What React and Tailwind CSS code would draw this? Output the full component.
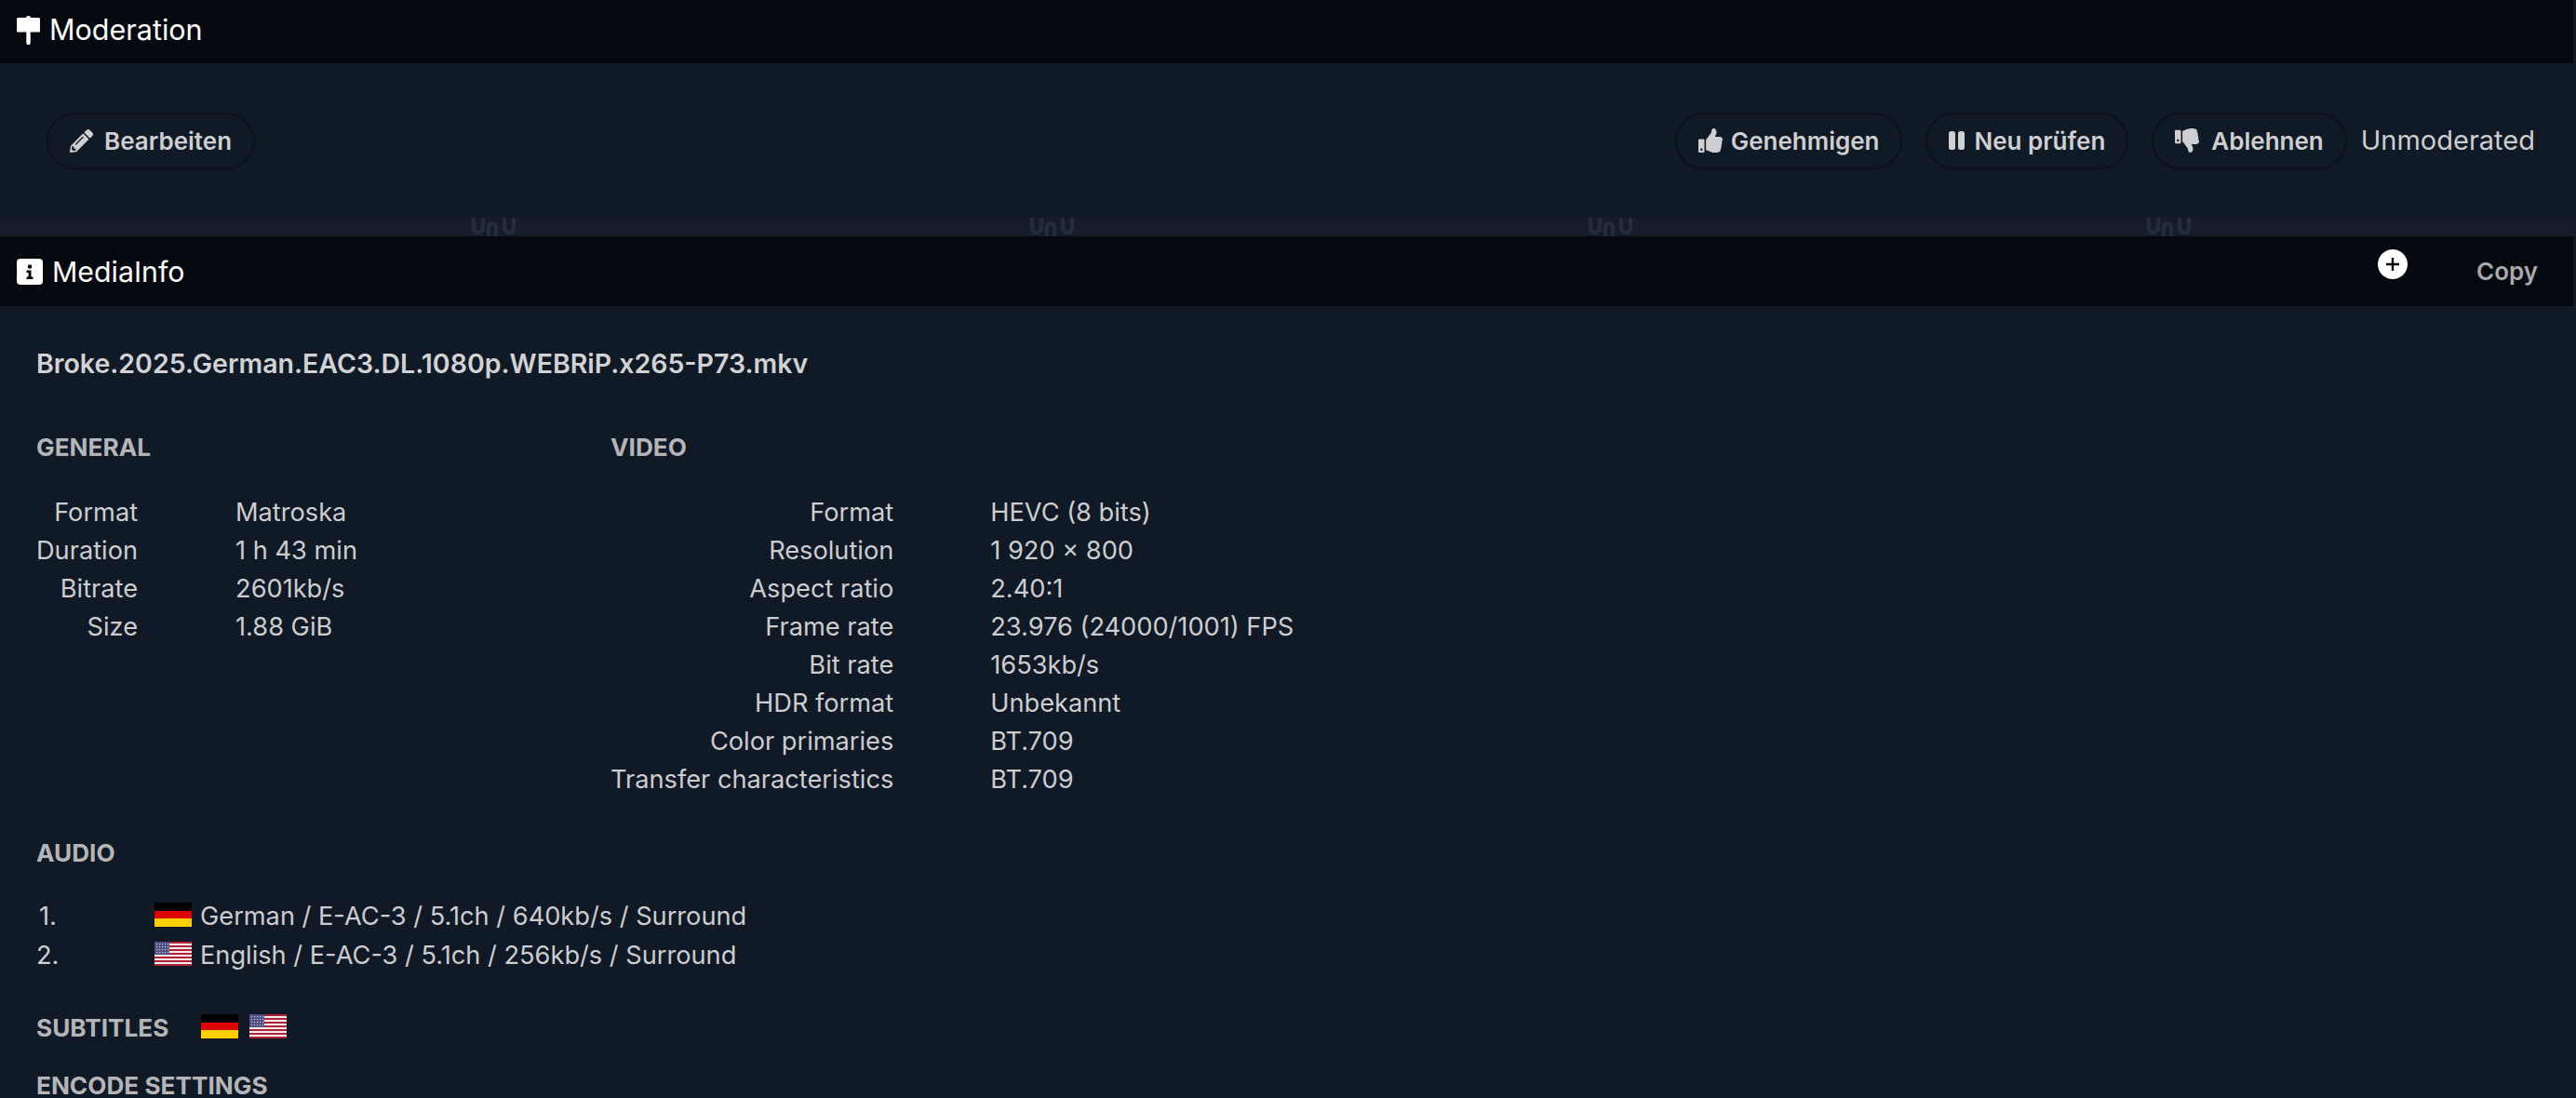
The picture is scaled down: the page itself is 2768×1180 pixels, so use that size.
import { FaPencilAlt, FaThumbsUp, FaThumbsDown } from 'react-icons/fa'

const GENERAL = [
  ['Format', 'Matroska'],
  ['Duration', '1 h 43 min'],
  ['Bitrate', '2601kb/s'],
  ['Size', '1.88 GiB'],
]

const VIDEO = [
  ['Format', 'HEVC (8 bits)'],
  ['Resolution', '1 920 × 800'],
  ['Aspect ratio', '2.40:1'],
  ['Frame rate', '23.976 (24000/1001) FPS'],
  ['Bit rate', '1653kb/s'],
  ['HDR format', 'Unbekannt'],
  ['Color primaries', 'BT.709'],
  ['Transfer characteristics', 'BT.709'],
]

function FlagDe({ className }) {
  return (
    <svg viewBox="0 0 40 26" className={className}>
      <rect width="40" height="9" fill="#000" />
      <rect y="9" width="40" height="9" fill="#dd0000" />
      <rect y="17" width="40" height="9" fill="#ffce00" />
    </svg>
  )
}

function FlagUs({ className }) {
  const stripes = [0, 4, 8, 12, 16, 20, 24]
  const cols = [2, 5, 8, 11, 14]
  const lines = [2, 5, 8, 11]
  return (
    <svg viewBox="0 0 40 26" className={className}>
      <rect width="40" height="26" fill="#eee" />
      {stripes.map((y) => <rect key={y} y={y} width="40" height="2" fill="#b22234" />)}
      <rect width="16" height="14" fill="#4f4f82" />
      {lines.map((y) => cols.map((x) => <rect key={`${x}-${y}`} x={x} y={y} width="1.200" height="1.200" fill="#c8c8d8" />))}
    </svg>
  )
}

function Mallet({ className }) {
  return (
    <svg viewBox="0 0 25 32" className={className} fill="currentColor">
      <path d="M1.500 3H9.500c.6 0 1-.5 1.200-1.200.3-1.100 3.300-1.100 3.600 0 .2.700.6 1.200 1.200 1.200h8c.8 0 1.500.7 1.500 1.500v13c0 .8-.7 1.200-1.500 1H1.500c-.8.200-1.500-.2-1.500-1v-13C0 3.700.7 3 1.500 3z" />
      <path d="M10.300 18h4.400v12a2.200 2.200 0 0 1-4.400 0z" />
    </svg>
  )
}

function InfoBox({ className }) {
  return (
    <svg viewBox="0 0 28 28" className={className}>
      <rect width="28" height="28" rx="4" fill="#fff" />
      <circle cx="14" cy="8.500" r="2.300" fill="#05090f" />
      <path d="M10.500 12.500h5v7h2v2.500h-7v-2.500h2v-4.500h-2z" fill="#05090f" />
    </svg>
  )
}

function PlusDot({ className }) {
  return (
    <svg viewBox="0 0 32 32" className={className}>
      <circle cx="16" cy="16" r="16" fill="#fff" />
      <path d="M14.800 9h2.400v5.800H23v2.400h-5.800V23h-2.400v-5.800H9v-2.400h5.800z" fill="#05090f" />
    </svg>
  )
}

function PauseBars({ className }) {
  return (
    <svg viewBox="0 0 17 20" className={className} fill="currentColor">
      <rect width="7" height="20" rx="2.500" />
      <rect x="10" width="7" height="20" rx="2.500" />
    </svg>
  )
}

function Pill({ icon, children, gap = 'gap-[9px]' }) {
  return (
    <button className={`flex h-[61px] items-center rounded-full border-2 border-[#0a111b] px-[23px] text-[26px] font-semibold text-[#cfcfd1] ${gap}`}>
      {icon}
      {children}
    </button>
  )
}

function SpecTable({ rows, gap }) {
  return (
    <table className="mt-[34px] text-[27.2px] leading-[41px] text-[#cdcdcf]">
      <tbody>
        {rows.map(([label, value]) => (
          <tr key={label}>
            <td className={`text-right ${gap}`}>{label}</td>
            <td>{value}</td>
          </tr>
        ))}
      </tbody>
    </table>
  )
}

function Heading({ children, className = '' }) {
  return <h3 className={`text-[26.200px] font-bold text-[#b5b5b8] ${className}`}>{children}</h3>
}

export default function App() {
  return (
    <div className="h-[1180px] overflow-hidden bg-[#101a27] font-['Inter',sans-serif]">
      <header className="mr-[3px] flex h-[68px] items-center gap-[10px] bg-[#05090f] pb-[4px] pl-[18px] text-[30.500px] text-white">
        <Mallet className="h-[32px] w-[25px]" />
        <span>Moderation</span>
      </header>

      <div className="flex h-[166px] items-center justify-between pr-[44px] pl-[50px]">
        <Pill icon={<FaPencilAlt className="h-[25px] w-[25px]" />} gap="gap-[12px]">Bearbeiten</Pill>
        <div className="flex items-center">
          <div className="flex gap-[25px]">
            <Pill icon={<FaThumbsUp className="h-[26px] w-[26px]" />}>Genehmigen</Pill>
            <Pill icon={<PauseBars className="h-[20px] w-[17px]" />} gap="gap-[10px]">Neu prüfen</Pill>
            <Pill icon={<FaThumbsDown className="h-[26px] w-[26px]" />} gap="gap-[13px]">Ablehnen</Pill>
          </div>
          <span className="ml-[15px] text-[29px] text-[#cdcdcf]">Unmoderated</span>
        </div>
      </div>

      <div className="h-[20px] overflow-hidden bg-[#161d2a]">
        <svg width="2768" height="20" fill="none" stroke="#242c40" strokeWidth="4">
          <defs>
            <pattern id="wave" x="505" width="600" height="20" patternUnits="userSpaceOnUse">
              <path d="M4 0v11a5 5 0 0 0 10 0V0M20 20v-10a4 4 0 0 1 8 0v10M37 0v11a5 5 0 0 0 10 0V0" />
            </pattern>
          </defs>
          <rect width="2768" height="20" fill="url(#wave)" stroke="none" />
        </svg>
      </div>

      <header className="mr-[3px] flex h-[75px] items-center justify-between bg-[#05090f] pr-[38px] pl-[18px] text-white">
        <div className="flex items-center gap-[10px] text-[30.300px]">
          <InfoBox className="h-[28px] w-[28px]" />
          <span className="mt-[2px]">MediaInfo</span>
        </div>
        <div className="flex items-center gap-[74px]">
          <PlusDot className="mb-[16px] h-[32px] w-[32px]" />
          <span className="text-[26px] font-semibold text-[#a9a9ac]">Copy</span>
        </div>
      </header>

      <main className="pt-[44px] pl-[39px]">
        <div className="text-[28.500px] leading-[36px] font-semibold text-[#d2d2d4]">Broke.2025.German.EAC3.DL.1080p.WEBRiP.x265-P73.mkv</div>

        <div className="mt-[57px] flex">
          <section className="w-[617px]">
            <Heading className="leading-[30px]">GENERAL</Heading>
            <SpecTable rows={GENERAL} gap="pr-[105px]" />
          </section>
          <section>
            <Heading className="leading-[30px]">VIDEO</Heading>
            <SpecTable rows={VIDEO} gap="pr-[104px]" />
          </section>
        </div>

        <Heading className="mt-[44px] leading-[30px]">AUDIO</Heading>
        <div className="mt-[32px] text-[27.200px] leading-[42px] text-[#cdcdcf]">
          <div className="flex items-center">
            <span className="w-[127px] pl-[3px]">1.</span>
            <FlagDe className="mb-[4px] h-[26px] w-[40px]" />
            <span className="ml-[9px]">German / E-AC-3 / 5.1ch / 640kb/s / Surround</span>
          </div>
          <div className="flex items-center">
            <span className="w-[127px]">2.</span>
            <FlagUs className="mb-[4px] h-[26px] w-[40px]" />
            <span className="ml-[9px]">English / E-AC-3 / 5.1ch / 256kb/s / Surround</span>
          </div>
        </div>

        <div className="mt-[42px] flex items-center">
          <Heading className="w-[177px] leading-[30px]">SUBTITLES</Heading>
          <FlagDe className="mb-[4px] h-[26px] w-[40px]" />
          <FlagUs className="mb-[4px] ml-[12px] h-[26px] w-[40px]" />
        </div>

        <Heading className="mt-[34px] leading-[26px]">ENCODE SETTINGS</Heading>
      </main>
    </div>
  )
}
